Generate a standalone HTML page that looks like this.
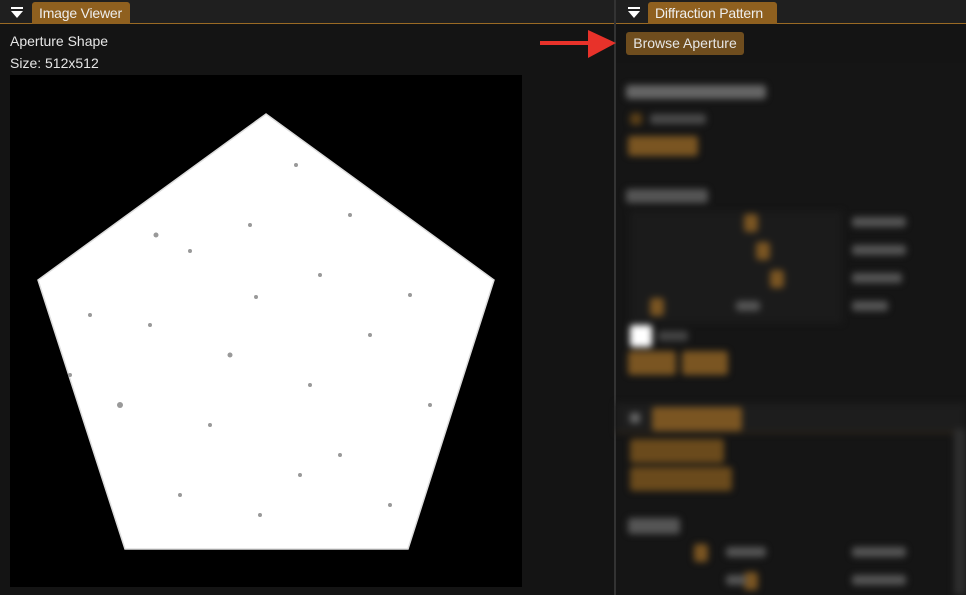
<!DOCTYPE html>
<html><head><meta charset="utf-8"><style>
*{margin:0;padding:0;box-sizing:border-box}
body{width:966px;height:595px;background:#141414;font-family:"Liberation Sans",sans-serif;overflow:hidden;position:relative;color:#e6e6e6}
.bar{position:absolute;top:0;height:24px;background:#1f1f1f;border-bottom:1px solid #9a6a24}
.tab{position:absolute;top:2px;height:22px;background:#8f601f;border-radius:3px 3px 0 0;color:#eee;font-size:14px;line-height:22px;padding-left:7px;letter-spacing:-0.2px}
.tri{position:absolute;top:11px;width:0;height:0;border-left:6px solid transparent;border-right:6px solid transparent;border-top:7px solid #fff}
.tri:before{content:"";position:absolute;left:-6px;top:-11px;width:12px;height:2px;background:#fff}
.t{position:absolute;font-size:14px;color:#e6e6e6}
.b{position:absolute;background:#7a5522;border-radius:3px}
.g{position:absolute;background:#777;height:10px;border-radius:3px}
</style></head><body>
<div class="bar" style="left:0;width:614px"></div>
<div class="bar" style="left:616px;width:350px"></div>
<div class="tri" style="left:11px"></div>
<div class="tab" style="left:32px;width:98px">Image Viewer</div>
<div class="tri" style="left:628px"></div>
<div class="tab" style="left:648px;width:129px">Diffraction Pattern</div>
<div style="position:absolute;left:614px;top:0;width:2px;height:595px;background:#333"></div>
<div class="t" style="left:10px;top:33px">Aperture Shape</div>
<div class="t" style="left:10px;top:55px">Size: 512x512</div>
<svg style="position:absolute;left:10px;top:75px" width="512" height="512">
<rect width="512" height="512" fill="#000"/>
<polygon points="256,39 484,205 398,474 115,474 28,205" fill="#fff" stroke="#ddd" stroke-width="1.5"/>
<g fill="#999">
<circle cx="146" cy="160" r="2.5"/><circle cx="180" cy="176" r="2"/><circle cx="286" cy="90" r="2"/><circle cx="246" cy="222" r="2"/><circle cx="220" cy="280" r="2.5"/><circle cx="300" cy="310" r="2"/><circle cx="340" cy="140" r="2"/><circle cx="110" cy="330" r="3"/><circle cx="360" cy="260" r="2"/><circle cx="400" cy="220" r="2"/><circle cx="170" cy="420" r="2"/><circle cx="290" cy="400" r="2"/><circle cx="80" cy="240" r="2"/><circle cx="420" cy="330" r="2"/><circle cx="200" cy="350" r="2"/><circle cx="250" cy="440" r="2"/><circle cx="330" cy="380" r="2"/><circle cx="140" cy="250" r="2"/><circle cx="380" cy="430" r="2"/><circle cx="60" cy="300" r="2"/><circle cx="310" cy="200" r="2"/><circle cx="240" cy="150" r="2"/>
</g></svg>
<div style="position:absolute;left:626px;top:32px;width:118px;height:23px;background:#6f4d1e;border-radius:3px;color:#e6e6e6;font-size:14px;line-height:23px;text-align:center">Browse Aperture</div>
<svg style="position:absolute;left:538px;top:30px" width="80" height="30"><rect x="2" y="11" width="50" height="4" fill="#e8322a"/><polygon points="50,0 78,13 50,28" fill="#e8322a"/></svg>
<div style="position:absolute;left:616px;top:63px;width:350px;height:532px;background:#151515"></div>
<div style="position:absolute;left:616px;top:63px;width:350px;height:532px;filter:blur(3.5px)">
<div class="g" style="left:10px;top:22px;width:140px;height:14px;background:#666"></div>
<div class="b" style="left:14px;top:50px;width:12px;height:12px;background:#5a3f18"></div>
<div class="g" style="left:34px;top:51px;width:56px;background:#4a4a4a"></div>
<div class="b" style="left:12px;top:73px;width:70px;height:20px"></div>
<div class="g" style="left:10px;top:126px;width:82px;height:14px;background:#555"></div>
<div style="position:absolute;left:14px;top:148px;width:212px;height:112px;background:#1b1b1b"></div>
<div class="b" style="left:128px;top:151px;width:14px;height:18px"></div><div class="g" style="left:236px;top:154px;width:54px;background:#555"></div>
<div class="b" style="left:140px;top:179px;width:14px;height:18px"></div><div class="g" style="left:236px;top:182px;width:54px;background:#555"></div>
<div class="b" style="left:154px;top:207px;width:14px;height:18px"></div><div class="g" style="left:236px;top:210px;width:50px;background:#555"></div>
<div class="b" style="left:34px;top:235px;width:14px;height:18px"></div><div class="g" style="left:120px;top:238px;width:24px;background:#555"></div><div class="g" style="left:236px;top:238px;width:36px;background:#555"></div>
<div style="position:absolute;left:14px;top:262px;width:22px;height:22px;background:#fff;border-radius:3px"></div>
<div class="g" style="left:42px;top:268px;width:30px;background:#444"></div>
<div class="b" style="left:12px;top:288px;width:48px;height:24px"></div>
<div class="b" style="left:66px;top:288px;width:46px;height:24px"></div>
<div style="position:absolute;left:0;top:340px;width:350px;height:30px;background:#1d1d1d;border-bottom:1px solid #4a3519"></div>
<div style="position:absolute;left:14px;top:350px;width:10px;height:10px;background:#666"></div>
<div class="b" style="left:36px;top:344px;width:90px;height:24px"></div>
<div class="b" style="left:14px;top:376px;width:94px;height:24px;background:#6a4a1c"></div>
<div class="b" style="left:14px;top:404px;width:102px;height:24px;background:#6a4a1c"></div>
<div style="position:absolute;left:338px;top:366px;width:12px;height:166px;background:#2e2e2e"></div>
<div class="g" style="left:12px;top:455px;width:52px;height:16px;background:#555"></div>
<div class="b" style="left:78px;top:481px;width:14px;height:18px"></div><div class="g" style="left:110px;top:484px;width:40px;background:#555"></div><div class="g" style="left:236px;top:484px;width:54px;background:#555"></div>
<div class="b" style="left:128px;top:509px;width:14px;height:18px"></div><div class="g" style="left:110px;top:512px;width:20px;background:#555"></div><div class="g" style="left:236px;top:512px;width:54px;background:#555"></div>
</div>
</body></html>
